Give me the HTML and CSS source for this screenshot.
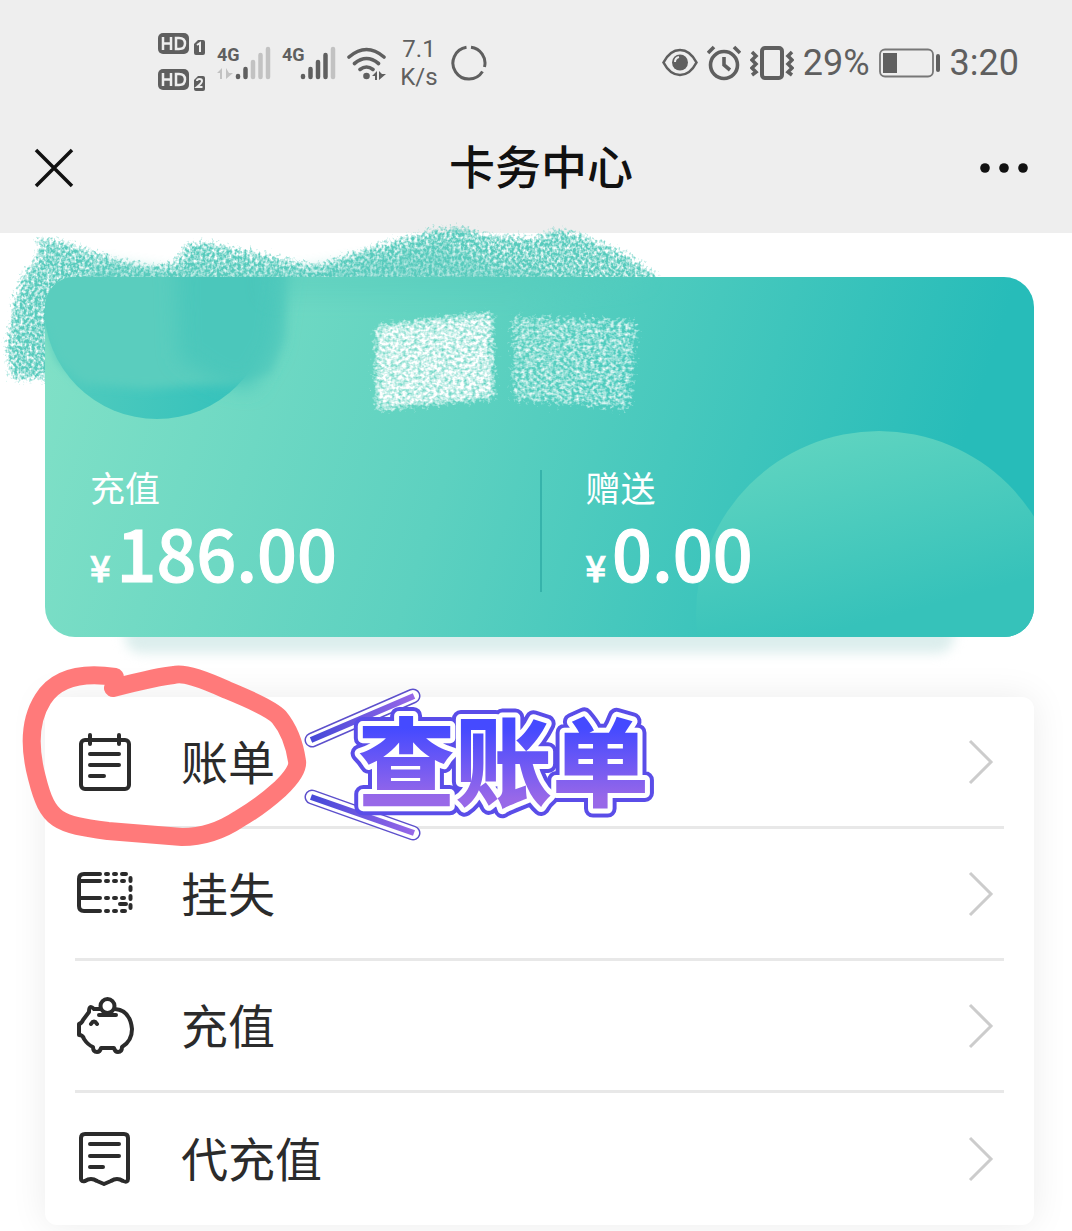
FILE: index.html
```
<!DOCTYPE html>
<html lang="zh-CN">
<head>
  <meta charset="UTF-8" />
  <meta name="viewport" content="width=device-width, initial-scale=1.0" />
  <title>卡务中心</title>
  <link rel="stylesheet" href="styles.css">
</head>
<body>
  <header class="top">
    <div class="status">
      <div class="status-group">
        <svg class="hd" width="48" height="60" viewBox="0 0 48 60">
          <g fill="#5f5f5f">
            <rect width="31" height="21" rx="5"/>
            <rect y="36" width="31" height="21" rx="5"/>
            <path d="M36 11l4-4h5q2 0 2 2v11q0 2-2 2h-7q-2 0-2-2zM36 47l4-4h5q2 0 2 2v11q0 2-2 2h-7q-2 0-2-2z"/>
          </g>
          <g fill="none" stroke="#eee" stroke-width="2.5">
            <path d="M5 4v13M13 4v13M5 10.500h8M18 5v11h3q6 0 6-5.500t-6-5.500zM5 40v13M13 40v13M5 46.500h8M18 41v11h3q6 0 6-5.500t-6-5.500z"/>
            <path stroke-width="2" d="M39 12l3-2v9M39 48q0-2 2.500-2t2.500 2q0 2-5 6h5.500"/>
          </g>
        </svg>
        <svg class="signal" width="54" height="36" viewBox="0 0 54 36">
          <text class="net" x="0" y="16">4G</text>
          <g stroke-width="4.500" stroke-linecap="round">
            <path stroke="#5f5f5f" d="M21 31v1M28.500 24v8"/>
            <path stroke="#c2c2c2" d="M36 17v15M43.500 10v22M51 4v28"/>
          </g>
          <path fill="#c2c2c2" d="M0 28l5-5v11H3v-6zM9 23v11l7-6h-4l-3-5z"/>
        </svg>
        <svg class="signal" width="54" height="36" viewBox="0 0 54 36">
          <text class="net" x="0" y="16">4G</text>
          <g stroke-width="4.500" stroke-linecap="round">
            <path stroke="#5f5f5f" d="M21 31v1M28.500 24v8M36 17v15M43.500 10v22"/>
            <path stroke="#c2c2c2" d="M51 4v28"/>
          </g>
        </svg>
        <svg width="40" height="36" viewBox="0 0 40 36">
          <g fill="none" stroke="#5f5f5f" stroke-width="3.600" stroke-linecap="round">
            <path d="M2 12Q19.500-3 37 12M7.500 18.500q12-10 24 0M13 24.500q6.500-5 13 0"/>
          </g>
          <circle cx="19.500" cy="31" r="3.300" fill="#5f5f5f"/>
          <path fill="#5f5f5f" d="M25 31l5-5v9h-2v-4zM32 26v9l7-6h-4z"/>
        </svg>
        <div class="speed"><span>7.1</span><span>K/s</span></div>
        <svg width="36" height="36" viewBox="0 0 36 36" fill="none" stroke="#5f5f5f" stroke-width="3">
          <path d="M20 2.200A16 16 0 0 1 33.500 22M31.500 26.500A16 16 0 1 1 15.500 2.200"/>
        </svg>
      </div>
      <div class="status-group status-right">
        <svg width="36" height="36" viewBox="0 0 36 36">
          <path d="M1.500 17.500Q8 5 18 5t16.500 12.500Q28 30 18 30T1.500 17.500z" fill="none" stroke="#5f5f5f" stroke-width="2.600"/>
          <circle cx="18" cy="17.500" r="8" fill="#5f5f5f"/>
          <path d="M13 17q0-4 4-5" fill="none" stroke="#eee" stroke-width="2"/>
        </svg>
        <svg width="34" height="36" viewBox="0 0 34 36" fill="none" stroke="#5f5f5f" stroke-width="3.600">
          <circle cx="17" cy="20" r="13.500"/>
          <path d="M17 12v8l6 5M1 8l6-6M27 2l6 6"/>
        </svg>
        <svg width="44" height="36" viewBox="0 0 44 36" fill="none" stroke="#5f5f5f">
          <rect x="12" y="3" width="20" height="30" rx="3" stroke-width="4"/>
          <path stroke-width="3.500" d="M2 7l4 4-4 4 4 4-4 4 4 4-4 3M42 7l-4 4 4 4-4 4 4 4-4 4 4 3"/>
        </svg>
        <span class="battery-text">29%</span>
        <svg class="battery" width="62" height="30" viewBox="0 0 62 30">
          <rect x="1" y="1.500" width="53" height="27" rx="5" fill="none" stroke="#777" stroke-width="1.800"/>
          <path fill="#5f5f5f" d="M4 5h14v20H4zM57 8q0-2 2-2t2 2v14q0 2-2 2t-2-2z"/>
        </svg>
        <span class="clock">3:20</span>
      </div>
    </div>
    <nav class="nav">
      <button class="nav-btn" aria-label="关闭">
        <svg width="40" height="40" viewBox="0 0 40 40" fill="none" stroke="#111" stroke-width="3.500"><path d="M2 2l36 36M38 2L2 38"/></svg>
      </button>
      <h1>卡务中心</h1>
      <button class="nav-btn" aria-label="更多">
        <svg width="50" height="12" viewBox="0 0 50 12" fill="#111"><circle cx="5" cy="6" r="4.800"/><circle cx="24" cy="6" r="4.800"/><circle cx="43" cy="6" r="4.800"/></svg>
      </button>
    </nav>
  </header>

  <!-- chalk strokes that stick out round the card -->
  <svg class="chalk" width="680" height="430" viewBox="0 0 680 430">
    <defs>
      <filter id="grain" x="-10%" y="-20%" width="120%" height="140%">
        <feGaussianBlur in="SourceAlpha" stdDeviation="6" result="soft"/>
        <feTurbulence type="fractalNoise" baseFrequency="0.34 0.3" numOctaves="2" seed="4" result="noise"/>
        <feComposite in="soft" in2="noise" operator="arithmetic" k1="0" k2="2" k3="2.400" k4="-2.500" result="mask"/>
        <feFlood flood-color="#59cbbd"/>
        <feComposite in2="mask" operator="in"/>
      </filter>
    </defs>
    <g filter="url(#grain)">
      <path d="M32 234L62 237L100 250L145 262L174 260L182 240L205 238L280 254L315 262L360 246L430 226L465 222L480 230L535 234L555 224L585 232L630 251L662 274V300H130V384H8L2 348L10 300L20 270L34 258z"/>
    </g>
    <path class="chalk-core" d="M100 262L180 272L300 270L400 254L440 242L490 262L560 274L640 290H80z"/>
  </svg>

  <main class="page">
    <section class="card">
      <div class="disc disc-left"></div>
      <div class="disc disc-right"></div>
      <svg class="smudge" width="660" height="160" viewBox="0 0 660 160">
        <defs>
          <filter id="blur" x="-30%" y="-30%" width="160%" height="160%"><feGaussianBlur stdDeviation="10"/></filter>
          <filter id="blur-light" x="-20%" y="-20%" width="140%" height="140%"><feGaussianBlur stdDeviation="5"/></filter>
          <filter id="white-grain" x="-10%" y="-10%" width="120%" height="120%">
            <feGaussianBlur in="SourceAlpha" stdDeviation="5" result="soft"/>
            <feTurbulence type="fractalNoise" baseFrequency="0.26 0.32" numOctaves="2" seed="9" result="noise"/>
            <feComposite in="soft" in2="noise" operator="arithmetic" k1="0" k2="1.500" k3="1.900" k4="-1.750" result="mask"/>
            <feFlood flood-color="#fff"/>
            <feComposite in2="mask" operator="in"/>
          </filter>
        </defs>
        <path filter="url(#blur-light)" fill="#5acdbe" d="M-40-40H240V60L226 96L180 106L100 112L36 106L12 84L0 50L-40 30z"/>
        <path filter="url(#blur)" fill="#4cc7bb" d="M130-40H246L230 70L206 112L170 104L134 80z"/>
        <path filter="url(#blur)" fill="#52cabd" opacity=".35" d="M220-60H600V6L470 20H220z"/>
        <g filter="url(#white-grain)">
          <path d="M328 46L450 32L452 124L328 136z"/>
          <path opacity=".75" d="M464 36L596 40L588 136L464 126z"/>
        </g>
      </svg>
      <div class="balance">
        <div class="label">充值</div>
        <div class="amount"><small>¥</small>186.00</div>
      </div>
      <div class="balance">
        <div class="label">赠送</div>
        <div class="amount"><small>¥</small>0.00</div>
      </div>
    </section>

    <nav class="menu">
      <a class="item" href="#bill">
        <svg class="icon" viewBox="0 0 60 60">
          <rect x="6" y="8" width="48" height="49" rx="4"/>
          <path d="M15 3v9M44 3v9M15 22h29M15 33h29M15 44h14"/>
        </svg>
        <span>账单</span>
        <svg class="arrow" viewBox="0 0 26 46"><path d="M2 2l21 21L2 44"/></svg>
      </a>
      <a class="item" href="#loss">
        <svg class="icon" viewBox="0 0 60 60">
          <path d="M25 10H9q-5 0-5 5v27q0 5 5 5h16M5 17h20M5 34h20M31 10h2M39 10h2M47 10h4M31 17h2M39 17h2M47 17h2M31 34h2M39 34h2M47 34h2M31 47h2M39 47h2M47 47h3M45 40h6M55.500 14v3M55.500 23v3M55.500 32v3M55.500 41v3"/>
        </svg>
        <span>挂失</span>
        <svg class="arrow" viewBox="0 0 26 46"><path d="M2 2l21 21L2 44"/></svg>
      </a>
      <a class="item" href="#recharge">
        <svg class="icon" viewBox="0 0 60 60">
          <path d="M19 13q-5-5-5 3L8 24q-1 3-4 4v11q4 0 5 4 4 6 9 8 0 5 4 5 3 0 4-4h13q1 4 4 4 4 0 4-5 10-6 10-18Q55 14 40 13M25 13l-6 0"/>
          <circle cx="32.500" cy="10" r="7"/>
          <path d="M24 19h17M16 28q3-5 6 0"/>
        </svg>
        <span>充值</span>
        <svg class="arrow" viewBox="0 0 26 46"><path d="M2 2l21 21L2 44"/></svg>
      </a>
      <a class="item" href="#recharge-other">
        <svg class="icon" viewBox="0 0 60 60">
          <path d="M6 50V9q0-4 4-4h39q4 0 4 4v41q0 4-5 2-6-4-12 0l-7 3-7-3q-6-4-12 0-4 1-4-2zM15 15h29M15 27h29M15 38h13"/>
        </svg>
        <span>代充值</span>
        <svg class="arrow" viewBox="0 0 26 46"><path d="M2 2l21 21L2 44"/></svg>
      </a>
    </nav>
  </main>

  <!-- hand-drawn marks on top of the first row -->
  <svg class="marks" width="680" height="200" viewBox="0 660 680 200">
    <defs>
      <linearGradient id="ink" x1="0" y1="0" x2="0" y2="1">
        <stop offset=".3" stop-color="#454aff"/>
        <stop offset=".8" stop-color="#9868e8"/>
      </linearGradient>
      <linearGradient id="bar" gradientUnits="userSpaceOnUse" x1="310" y1="0" x2="416" y2="0">
        <stop offset="0" stop-color="#4548d8"/>
        <stop offset="1" stop-color="#9868e8"/>
      </linearGradient>
    </defs>
    <path class="ring" d="M115 677Q62 669 43 699C29 721 29 748 37 778C48 822 58 824 108 831L182 837Q212 837 239 819Q260 807 280 789Q299 771 297 761Q293 734 279 717Q271 708 227 690Q186 671 174 675Q160 676 113 688"/>
    <g fill="none">
      <path stroke="#5d50cc" stroke-width="15" stroke-linecap="round" d="M312 740L413 696M312 797L413 833"/>
      <path stroke="#fff" stroke-width="12" stroke-linecap="round" d="M312 740L413 696M312 797L413 833"/>
      <path stroke="url(#bar)" stroke-width="6" d="M311 740L414 696M311 797L414 833"/>
    </g>
    <g class="note">
      <text class="note-edge" x="358" y="799">查账单</text>
      <text class="note-gap" x="358" y="799">查账单</text>
      <text class="note-fill" x="358" y="799">查账单</text>
    </g>
  </svg>
</body>
</html>
```
FILE: styles.css
```
* { box-sizing: border-box; }
body {
  margin: 0;
  position: relative;
  background: #fff;
  color: #2b2b2b;
  font-family: Roboto, "Noto Sans CJK SC", sans-serif;
}
.top {
  padding-bottom: 23px;
  background: #eee;
}
.status {
  display: flex;
  justify-content: space-between;
  align-items: center;
  height: 126px;
  padding: 0 53px 0 158px;
  color: #5f5f5f;
}
.status-group {
  display: flex;
  align-items: center;
  gap: 11px;
}
.status-right { gap: 9px; }
.signal { overflow: visible; }
.net {
  font-size: 18px;
  font-weight: bold;
  fill: #5f5f5f;
}
.speed {
  display: flex;
  flex-direction: column;
  align-items: center;
  width: 42px;
  font-size: 24px;
  line-height: 28px;
}
.battery-text, .clock {
  font-size: 36px;
  line-height: 40px;
}
.nav {
  display: flex;
  justify-content: space-between;
  align-items: center;
  height: 84px;
  padding: 0 38px 0 34px;
}
.nav-btn {
  display: flex;
  align-items: center;
  width: 54px;
  height: 54px;
  padding: 0;
  border: none;
  background: none;
}
.nav h1 {
  margin: 0 0 0 14px;
  color: #111;
  font-size: 46px;
  font-weight: 500;
  line-height: 60px;
}
.chalk {
  position: absolute;
  top: 0;
  left: 0;
}
.chalk-core {
  fill: #59cbbd;
  opacity: 0.4;
  filter: blur(7px);
}
.page {
  padding: 44px 38px 7px 45px;
}
.card {
  position: relative;
  display: grid;
  grid-template-columns: 1fr 1fr;
  align-items: end;
  height: 360px;
  padding-bottom: 45px;
  border-radius: 30px;
  color: #fff;
  background: linear-gradient(108deg, #82e1c7, #5dd1c0 42%, #27bcb9 88%);
  font-family: "Noto Sans CJK SC", sans-serif;
}
.card::after {
  content: "";
  position: absolute;
  z-index: -1;
  left: 80px;
  right: 80px;
  bottom: -16px;
  height: 40px;
  border-radius: 16px;
  background: #dceeed;
  filter: blur(6px);
}
.disc {
  position: absolute;
}
.disc-left {
  left: 0;
  top: 0;
  width: 226px;
  height: 142px;
  border-top-left-radius: 30px;
  background: linear-gradient(100deg, #56cdbe, #2fc0bb);
  clip-path: circle(113px at 112px 29px);
}
.disc-right {
  right: 0;
  bottom: 0;
  width: 338px;
  height: 206px;
  border-radius: 0 0 30px 0;
  background: linear-gradient(165deg, #66d7c1, #36c2ba 80%);
  clip-path: circle(183px at 183px 183px);
}
.smudge {
  position: absolute;
  left: 0;
  top: 0;
  border-top-left-radius: 30px;
  overflow: hidden;
}
.balance {
  position: relative;
  height: 122px;
  padding-left: 45px;
}
.balance + .balance {
  padding-left: 44px;
  border-left: 2px solid #36b3ab;
}
.label {
  font-size: 35px;
  line-height: 34px;
}
.amount {
  font-size: 70px;
  font-weight: 500;
  line-height: 96px;
  -webkit-text-stroke: 1px #fff;
}
.amount small {
  margin-right: 6px;
  font-size: 36px;
}
.menu {
  position: relative;
  margin-top: 60px;
  padding: 0 30px;
  border-radius: 12px;
  background: #fff;
  box-shadow: 0 0 36px rgba(0, 0, 0, 0.08);
  font-family: "Noto Sans CJK SC", sans-serif;
}
.item {
  display: flex;
  align-items: center;
  height: 132px;
  padding-right: 10px;
  border-bottom: 3px solid #e8e8e8;
  color: #2b2b2b;
  font-size: 47px;
  line-height: 60px;
  text-decoration: none;
}
.item:last-child { border-bottom: none; }
.item span { padding-bottom: 4px; }
.icon {
  width: 60px;
  height: 60px;
  margin-right: 46px;
  fill: none;
  stroke: #2b2b2b;
  stroke-width: 4;
  stroke-linecap: round;
  stroke-linejoin: round;
}
.arrow {
  width: 26px;
  height: 46px;
  margin-left: auto;
  fill: none;
  stroke: #ccc;
  stroke-width: 3;
}
.marks {
  position: absolute;
  left: 0;
  top: 660px;
  pointer-events: none;
}
.ring {
  fill: none;
  stroke: #ff7a7a;
  stroke-width: 18;
  stroke-linecap: round;
  stroke-linejoin: round;
}
.note {
  font-family: "Noto Sans CJK SC", sans-serif;
  font-size: 97px;
  font-weight: 900;
  stroke-linejoin: round;
}
.note-edge {
  fill: #5a4de8;
  stroke: #5a4de8;
  stroke-width: 18;
}
.note-gap {
  fill: #fff;
  stroke: #fff;
  stroke-width: 10;
}
.note-fill { fill: url(#ink); }
```
